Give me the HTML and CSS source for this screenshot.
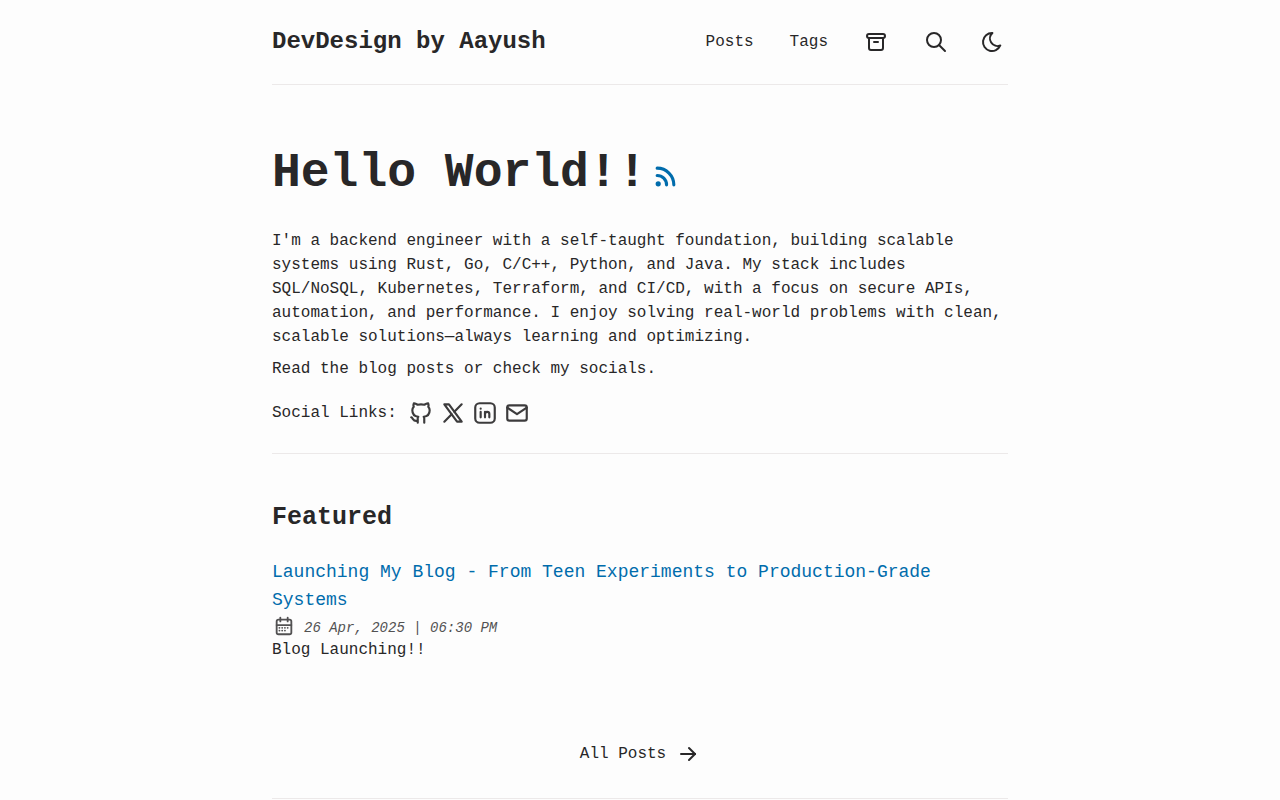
FILE: index.html
```html
<!DOCTYPE html>
<html lang="en">
<head>
    <meta charset="UTF-8">
    <meta name="viewport" content="width=device-width, initial-scale=1.0">
    <title>DevDesign by Aayush</title>
    <link rel="stylesheet" href="styles.css">
</head>
<body>

<header class="container">
    <div class="header-inner">
        <a class="logo" href="/">DevDesign by Aayush</a>
        <nav>
            <a class="nav-link" href="/posts">Posts</a>
            <a class="nav-link" href="/tags">Tags</a>
            <a class="nav-icon" href="/archives" aria-label="Archives">
                <svg class="icon" viewBox="0 0 24 24">
                    <path d="M5 4h14a2 2 0 0 1 0 4H5a2 2 0 0 1 0 -4z"/>
                    <path d="M5 8v10a2 2 0 0 0 2 2h10a2 2 0 0 0 2 -2V8"/>
                    <path d="M10 12h4"/>
                </svg>
            </a>
            <a class="nav-icon" href="/search" aria-label="Search">
                <svg class="icon" viewBox="0 0 24 24">
                    <path d="M10 10m-7 0a7 7 0 1 0 14 0a7 7 0 1 0 -14 0"/>
                    <path d="M21 21l-6 -6"/>
                </svg>
            </a>
            <button class="theme-btn" type="button" aria-label="Toggle theme">
                <svg class="icon" viewBox="0 0 24 24">
                    <path d="M12 3c.132 0 .263 0 .393 0a7.5 7.5 0 0 0 7.92 12.446a9 9 0 1 1 -8.313 -12.454z"/>
                </svg>
            </button>
        </nav>
    </div>
</header>

<main class="container">
    <section class="hero">
        <div class="hero-title">
            <h1>Hello World!!</h1>
            <a class="rss" href="/rss.xml" aria-label="RSS feed">
                <svg class="icon" viewBox="0 0 24 24">
                    <path d="M5 19m-1 0a1 1 0 1 0 2 0a1 1 0 1 0 -2 0"/>
                    <path d="M4 4a16 16 0 0 1 16 16"/>
                    <path d="M4 11a9 9 0 0 1 9 9"/>
                </svg>
            </a>
        </div>
        <p>I'm a backend engineer with a self-taught foundation, building scalable systems using Rust, Go, C/C++, Python, and Java. My stack includes SQL/NoSQL, Kubernetes, Terraform, and CI/CD, with a focus on secure APIs, automation, and performance. I enjoy solving real-world problems with clean, scalable solutions—always learning and optimizing.</p>
        <p>Read the blog posts or check my socials.</p>
        <div class="socials">
            <span>Social Links:</span>
            <div class="social-icons">
                <a href="https://github.com" aria-label="GitHub">
                    <svg class="icon" viewBox="0 0 24 24">
                        <path d="M9 19c-4.3 1.4 -4.3 -2.5 -6 -3m12 5v-3.5c0 -1 .1 -1.4 -.5 -2c2.8 -.3 5.5 -1.4 5.5 -6a4.6 4.6 0 0 0 -1.3 -3.2a4.2 4.2 0 0 0 -.1 -3.2s-1.1 -.3 -3.5 1.3a12.3 12.3 0 0 0 -6.2 0c-2.4 -1.6 -3.5 -1.3 -3.5 -1.3a4.2 4.2 0 0 0 -.1 3.2a4.6 4.6 0 0 0 -1.3 3.2c0 4.6 2.7 5.7 5.5 6c-.6 .6 -.6 1.2 -.5 2v3.5"/>
                    </svg>
                </a>
                <a href="https://x.com" aria-label="X">
                    <svg class="icon" viewBox="0 0 24 24">
                        <path d="M4 4l11.733 16h4.267l-11.733 -16z"/>
                        <path d="M4 20l6.768 -6.768m2.46 -2.46l6.772 -6.772"/>
                    </svg>
                </a>
                <a href="https://linkedin.com" aria-label="LinkedIn">
                    <svg class="icon" viewBox="0 0 24 24">
                        <path d="M8 11v5"/>
                        <path d="M8 8v.01"/>
                        <path d="M12 16v-5"/>
                        <path d="M16 16v-3a2 2 0 1 0 -4 0"/>
                        <path d="M3 7a4 4 0 0 1 4 -4h10a4 4 0 0 1 4 4v10a4 4 0 0 1 -4 4h-10a4 4 0 0 1 -4 -4z"/>
                    </svg>
                </a>
                <a href="mailto:hello@example.com" aria-label="Mail">
                    <svg class="icon" viewBox="0 0 24 24">
                        <path d="M3 7a2 2 0 0 1 2 -2h14a2 2 0 0 1 2 2v10a2 2 0 0 1 -2 2h-14a2 2 0 0 1 -2 -2v-10z"/>
                        <path d="M3 7l9 6l9 -6"/>
                    </svg>
                </a>
            </div>
        </div>
    </section>

    <section class="featured">
        <h2>Featured</h2>
        <ul>
            <li>
                <a class="post-link" href="/posts/launching-my-blog"><h3>Launching My Blog - From Teen Experiments to Production-Grade Systems</h3></a>
                <div class="post-date">
                    <svg class="icon" viewBox="0 0 24 24">
                        <path d="M4 7a2 2 0 0 1 2 -2h12a2 2 0 0 1 2 2v12a2 2 0 0 1 -2 2h-12a2 2 0 0 1 -2 -2v-12z"/>
                        <path d="M16 3v4"/>
                        <path d="M8 3v4"/>
                        <path d="M4 11h16"/>
                        <path d="M7 14h.013"/>
                        <path d="M10.01 14h.005"/>
                        <path d="M13.01 14h.005"/>
                        <path d="M16.015 14h.005"/>
                        <path d="M13.015 17h.005"/>
                        <path d="M7.01 17h.005"/>
                        <path d="M10.01 17h.005"/>
                    </svg>
                    <time datetime="2025-04-26T18:30">26 Apr, 2025 | 06:30 PM</time>
                </div>
                <p>Blog Launching!!</p>
            </li>
        </ul>
    </section>

    <div class="all-posts">
        <a href="/posts">
            All Posts
            <svg class="icon" viewBox="0 0 24 24">
                <path d="M5 12h14"/>
                <path d="M13 18l6 -6"/>
                <path d="M13 6l6 6"/>
            </svg>
        </a>
    </div>
</main>

<footer class="container">
    <hr>
</footer>

</body>
</html>
```
FILE: styles.css
```css
* {
    box-sizing: border-box;
    margin: 0;
    padding: 0;
}

body {
    font-family: "Liberation Mono", monospace;
    font-size: 16px;
    line-height: 24px;
    color: #282728;
    background-color: #fdfdfd;
}

a {
    color: inherit;
    text-decoration: none;
}

a:hover,
.theme-btn:hover {
    color: #006cac;
}

ul {
    list-style: none;
}

.container {
    max-width: 768px;
    margin: 0 auto;
    padding: 0 16px;
}

.icon {
    display: block;
    width: 24px;
    height: 24px;
    flex-shrink: 0;
    fill: none;
    stroke: currentColor;
    stroke-width: 2;
    stroke-linecap: round;
    stroke-linejoin: round;
}

/* Header */
.header-inner {
    display: flex;
    flex-wrap: wrap;
    align-items: center;
    justify-content: space-between;
    padding: 24px 0;
    border-bottom: 1px solid #ece9e9;
}

.logo {
    font-size: 24px;
    font-weight: bold;
    line-height: 36px;
}

nav {
    display: flex;
    align-items: center;
    gap: 36px;
    padding-right: 4px;
}

.theme-btn {
    margin-left: -4px;
    border: none;
    background: none;
    color: inherit;
    cursor: pointer;
}

/* Hero */
.hero {
    padding: 56px 0 27px;
    border-bottom: 1px solid #ece9e9;
}

.hero-title {
    display: flex;
    align-items: center;
    gap: 7px;
    margin-bottom: 24px;
}

h1 {
    font-size: 48px;
    line-height: 64px;
}

.rss {
    padding-top: 6px;
    color: #006cac;
}

.rss .icon {
    width: 25px;
    height: 25px;
    stroke-width: 3;
}

.hero p {
    margin-bottom: 8px;
}

.socials {
    display: flex;
    align-items: center;
    gap: 11px;
    padding-top: 11px;
}

.social-icons {
    display: flex;
    gap: 6px;
    opacity: 0.9;
}

.social-icons .icon {
    width: 26px;
    height: 26px;
}

/* Featured */
.featured {
    padding: 48px 0 24px;
}

h2 {
    margin-bottom: 24px;
    font-size: 25px;
    line-height: 32px;
}

.post-link {
    color: #006cac;
}

h3 {
    font-size: 18px;
    font-weight: normal;
    line-height: 28px;
}

.post-date {
    display: flex;
    align-items: flex-end;
    gap: 8px;
    font-size: 14px;
    font-style: italic;
    line-height: 20px;
    opacity: 0.8;
}

.post-date .icon {
    padding: 1px;
}

/* All posts */
.all-posts {
    display: flex;
    justify-content: center;
    padding: 56px 0 32px;
}

.all-posts a {
    display: flex;
    align-items: center;
    gap: 10px;
}

hr {
    border: none;
    border-top: 1px solid #ece9e9;
}
```
